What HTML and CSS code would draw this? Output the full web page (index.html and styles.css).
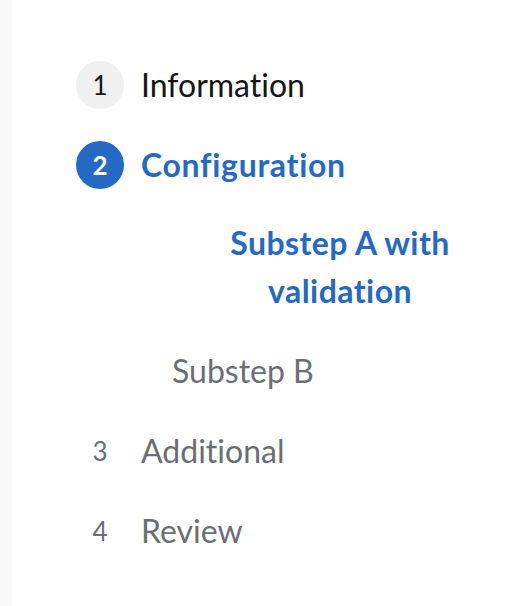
FILE: index.html
```html
<!DOCTYPE html>
<html lang="en">
<head>
<meta charset="utf-8">
<title>Wizard navigation</title>
<link rel="stylesheet" href="styles.css">
</head>
<body>
<div class="page">
  <div class="rail"></div>
  <nav class="wizard-nav">
    <ol class="steps">
      <li class="step">
        <div class="step-row">
          <span class="step-num is-visited">1</span>
          <span class="step-label">Information</span>
        </div>
      </li>
      <li class="step">
        <div class="step-row is-current">
          <span class="step-num is-current">2</span>
          <span class="step-label">Configuration</span>
        </div>
        <ol class="substeps">
          <li class="substep is-current">Substep A with validation</li>
          <li class="substep">Substep B</li>
        </ol>
      </li>
      <li class="step">
        <div class="step-row is-muted">
          <span class="step-num">3</span>
          <span class="step-label">Additional</span>
        </div>
      </li>
      <li class="step">
        <div class="step-row is-muted">
          <span class="step-num">4</span>
          <span class="step-label">Review</span>
        </div>
      </li>
    </ol>
  </nav>
</div>
</body>
</html>
```
FILE: styles.css
```css
html, body {
  margin: 0;
  padding: 0;
  background: #ffffff;
}

body {
  font-family: "Lato", "Open Sans", sans-serif;
  font-variant-ligatures: none;
  font-size: 32px;
  line-height: 48px;
  color: #151515;
}

.page {
  display: flex;
  min-height: 606px;
}

.rail {
  flex: 0 0 12px;
  background: #f8f8f8;
}

.wizard-nav {
  flex: 1;
  padding: 45px 6px 0 64px;
}

.steps,
.substeps {
  list-style: none;
  margin: 0;
  padding: 0;
}

.step-row {
  display: flex;
  align-items: center;
  gap: 17px;
  padding: 16px 0;
}

.step-num {
  flex: 0 0 48px;
  width: 48px;
  height: 48px;
  border-radius: 50%;
  text-align: center;
  line-height: 48px;
  font-size: 26px;
  color: #6a6e73;
}

.step-num.is-visited {
  background: #f0f0f0;
  color: #151515;
}

.step-num.is-current {
  background: #2469c5;
  color: #ffffff;
  font-weight: 700;
}

.step-row.is-current .step-label {
  color: #2469c5;
  font-weight: 700;
  letter-spacing: 0.7px;
}

.step-row.is-muted .step-label {
  color: #6a6e73;
}

.substeps {
  margin-top: -2px;
  padding-left: 96px;
}

.substep {
  padding: 16px 0;
  color: #6a6e73;
}

.substep.is-current {
  color: #2469c5;
  font-weight: 700;
  letter-spacing: 0.45px;
  text-align: center;
}
```
